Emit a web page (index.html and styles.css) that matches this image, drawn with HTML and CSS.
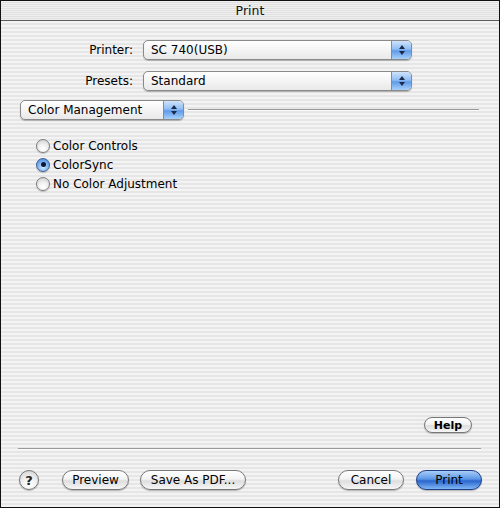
FILE: index.html
```html
<!DOCTYPE html>
<html>
<head>
<meta charset="utf-8">
<link rel="stylesheet" href="styles.css">
</head>
<body>
<div class="window">
  <div class="titlebar">Print</div>
  <div class="content">
    <div class="form">
      <div class="label">Printer:</div>
      <div class="popup wide"><span class="ptext">SC 740(USB)</span><span class="arrows"><svg width="8" height="12" viewBox="0 0 8 12"><path d="M4 1 L7 5 L1 5 Z M4 11 L7 7 L1 7 Z" fill="#1b2a4a"/></svg></span></div>
      <div class="label">Presets:</div>
      <div class="popup wide"><span class="ptext">Standard</span><span class="arrows"><svg width="8" height="12" viewBox="0 0 8 12"><path d="M4 1 L7 5 L1 5 Z M4 11 L7 7 L1 7 Z" fill="#1b2a4a"/></svg></span></div>
    </div>
    <div class="panelrow">
      <div class="popup panel"><span class="ptext">Color Management</span><span class="arrows"><svg width="8" height="12" viewBox="0 0 8 12"><path d="M4 1 L7 5 L1 5 Z M4 11 L7 7 L1 7 Z" fill="#1b2a4a"/></svg></span></div>
      <div class="rule"></div>
    </div>
    <div class="radios">
      <div class="radio"><span class="dot"></span>Color Controls</div>
      <div class="radio"><span class="dot on"></span>ColorSync</div>
      <div class="radio"><span class="dot"></span>No Color Adjustment</div>
    </div>
    <div class="spacer"></div>
    <div class="helprow"><div class="btn small">Help</div></div>
    <div class="sep"></div>
    <div class="bottom">
      <div class="qbtn">?</div>
      <div class="btn w-preview">Preview</div>
      <div class="btn w-pdf">Save As PDF...</div>
      <div class="grow"></div>
      <div class="btn w-cancel">Cancel</div>
      <div class="btn primary w-print">Print</div>
    </div>
  </div>
</div>
</body>
</html>
```
FILE: styles.css
```css
html, body { margin: 0; padding: 0; }
body { width: 500px; height: 508px; font-family: "DejaVu Sans", "Liberation Sans", sans-serif; font-size: 12px; color: #000; }
.window {
  width: 500px; height: 508px; box-sizing: border-box;
  border: 1px solid #111;
  display: flex; flex-direction: column;
  background: repeating-linear-gradient(to bottom, #f3f3f3 0px, #f3f3f3 2px, #e6e6e6 2px, #e6e6e6 4px);
}
.titlebar {
  height: 19px; border-bottom: 1px solid #5a5a5a;
  display: flex; align-items: center; justify-content: center;
  font-size: 12.5px; color: #111;
  background: repeating-linear-gradient(to bottom, #efefef 0px, #efefef 1px, #e0e0e0 1px, #e0e0e0 2px);
}
.content { flex: 1; display: flex; flex-direction: column; padding-top: 19px; }
.form {
  display: grid; grid-template-columns: 132px 269px; column-gap: 10px; row-gap: 11px;
  align-items: center;
}
.label { text-align: right; }
.popup {
  height: 20px; box-sizing: border-box;
  border: 1px solid #8a8a8a; border-radius: 5px;
  background: linear-gradient(to bottom, #ffffff 0%, #f4f4f4 50%, #e9e9e9 100%);
  box-shadow: 0 1px 1px rgba(0,0,0,0.25);
  display: flex; align-items: center; overflow: hidden;
}
.ptext { flex: 1; padding-left: 7px; white-space: nowrap; }
.arrows {
  width: 19px; height: 100%; display: flex; align-items: center; justify-content: center;
  border-left: 1px solid #6a8fc6;
  background: linear-gradient(to bottom, #cfe3fb 0%, #8fbdf3 45%, #5f9ae8 55%, #a7d1fb 100%);
}
.panelrow { display: flex; align-items: center; margin-top: 9px; padding-left: 19px; padding-right: 20px; }
.panel { width: 164px; }
.rule { flex: 1; height: 1px; margin-left: 4px; background: #9a9a9a; border-bottom: 1px solid #fbfbfb; }
.radios { margin-top: 16px; padding-left: 35px; display: flex; flex-direction: column; }
.radio { height: 19px; display: flex; align-items: center; }
.dot {
  width: 14px; height: 14px; box-sizing: border-box; border-radius: 50%;
  border: 1px solid #7d7d7d; margin-right: 3px;
  background: radial-gradient(circle at 50% 75%, #ffffff 0%, #f2f2f2 40%, #c9c9c9 100%);
  box-shadow: 0 1px 1px rgba(0,0,0,0.2);
  display: flex; align-items: center; justify-content: center;
}
.dot.on {
  border-color: #3d5e95;
  background: radial-gradient(circle at 50% 70%, #cfe6ff 0%, #7fb4f2 50%, #3f7fd6 100%);
}
.dot.on::after { content: ""; width: 5px; height: 5px; border-radius: 50%; background: #0d1a33; }
.spacer { flex: 1; }
.helprow { display: flex; justify-content: flex-end; padding-right: 27px; }
.btn {
  height: 20px; box-sizing: border-box;
  border: 1px solid #777; border-radius: 10px;
  background: linear-gradient(to bottom, #ffffff 0%, #f3f3f3 45%, #dedede 55%, #f6f6f6 100%);
  box-shadow: 0 1px 1px rgba(0,0,0,0.25);
  display: flex; align-items: center; justify-content: center;
  white-space: nowrap;
}
.btn.small { width: 48px; height: 16px; font-size: 11px; font-weight: bold; border-radius: 8px; }
.sep { height: 1px; margin: 15px 18px 0 17px; background: #9a9a9a; border-bottom: 1px solid #fbfbfb; }
.bottom { display: flex; align-items: center; margin-top: 20px; padding: 0 17px 17px 18px; }
.qbtn {
  width: 20px; height: 20px; box-sizing: border-box; border-radius: 50%;
  border: 1px solid #777;
  background: radial-gradient(circle at 50% 75%, #ffffff 0%, #f0f0f0 45%, #cccccc 100%);
  box-shadow: 0 1px 1px rgba(0,0,0,0.25);
  display: flex; align-items: center; justify-content: center;
  font-weight: bold; font-size: 13px; color: #222;
}
.w-preview { width: 67px; margin-left: 23px; }
.w-pdf { width: 106px; margin-left: 11px; }
.grow { flex: 1; }
.w-cancel { width: 66px; }
.w-print { width: 66px; margin-left: 12px; }
.btn.primary {
  border-color: #1f3f86;
  background: linear-gradient(to bottom, #a9cdf8 0%, #5b96e6 45%, #2a66cc 55%, #7fb6f5 100%);
}
```
